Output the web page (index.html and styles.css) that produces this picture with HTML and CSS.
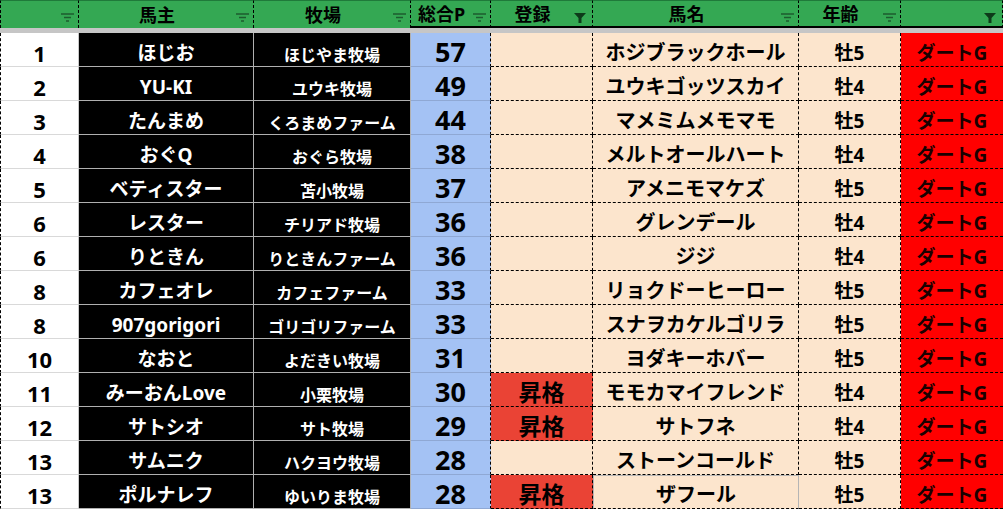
FILE: index.html
```html
<!DOCTYPE html>
<html lang="ja">
<head>
<meta charset="utf-8">
<link rel="stylesheet" href="styles.css">
</head>
<body>
<div class="sheet">
  <div class="hd c-a"><span></span><svg class="fi" viewBox="0 0 13 9"><path d="M0 1h13M3 4.5h7M5 8h3" /></svg></div>
  <div class="hd c-b">馬主<svg class="fi" viewBox="0 0 13 9"><path d="M0 1h13M3 4.5h7M5 8h3" /></svg></div>
  <div class="hd c-c">牧場<svg class="fi" viewBox="0 0 13 9"><path d="M0 1h13M3 4.5h7M5 8h3" /></svg></div>
  <div class="hd c-d hb">総合P<svg class="fi" viewBox="0 0 13 9"><path d="M0 1h13M3 4.5h7M5 8h3" /></svg></div>
  <div class="hd c-e hb">登録<svg class="ff" viewBox="0 0 12 10"><path d="M0 0H12L7.5 5V10H4.5V5Z" /></svg></div>
  <div class="hd c-f hb">馬名<svg class="fi" viewBox="0 0 13 9"><path d="M0 1h13M3 4.5h7M5 8h3" /></svg></div>
  <div class="hd c-g hb">年齢<svg class="fi" viewBox="0 0 13 9"><path d="M0 1h13M3 4.5h7M5 8h3" /></svg></div>
  <div class="hd c-h hb"><svg class="ff" viewBox="0 0 12 10"><path d="M0 0H12L7.5 5V10H4.5V5Z" /></svg></div>
  <div class="band"></div>

  <div class="rk">1</div><div class="ow">ほじお</div><div class="fm">ほじやま牧場</div><div class="pt">57</div><div class="rg"></div><div class="hn">ホジブラックホール</div><div class="ag">牡5</div><div class="cl">ダートG</div>
  <div class="rk">2</div><div class="ow">YU-KI</div><div class="fm">ユウキ牧場</div><div class="pt">49</div><div class="rg"></div><div class="hn">ユウキゴッツスカイ</div><div class="ag">牡4</div><div class="cl">ダートG</div>
  <div class="rk">3</div><div class="ow">たんまめ</div><div class="fm">くろまめファーム</div><div class="pt">44</div><div class="rg"></div><div class="hn">マメミムメモマモ</div><div class="ag">牡5</div><div class="cl">ダートG</div>
  <div class="rk">4</div><div class="ow">おぐQ</div><div class="fm">おぐら牧場</div><div class="pt">38</div><div class="rg"></div><div class="hn">メルトオールハート</div><div class="ag">牡4</div><div class="cl">ダートG</div>
  <div class="rk">5</div><div class="ow">ベティスター</div><div class="fm">苫小牧場</div><div class="pt">37</div><div class="rg"></div><div class="hn">アメニモマケズ</div><div class="ag">牡5</div><div class="cl">ダートG</div>
  <div class="rk">6</div><div class="ow">レスター</div><div class="fm">チリアド牧場</div><div class="pt">36</div><div class="rg"></div><div class="hn">グレンデール</div><div class="ag">牡4</div><div class="cl">ダートG</div>
  <div class="rk">6</div><div class="ow">りときん</div><div class="fm">りときんファーム</div><div class="pt">36</div><div class="rg"></div><div class="hn">ジジ</div><div class="ag">牡4</div><div class="cl">ダートG</div>
  <div class="rk">8</div><div class="ow">カフェオレ</div><div class="fm">カフェファーム</div><div class="pt">33</div><div class="rg"></div><div class="hn">リョクドーヒーロー</div><div class="ag">牡5</div><div class="cl">ダートG</div>
  <div class="rk">8</div><div class="ow">907gorigori</div><div class="fm">ゴリゴリファーム</div><div class="pt">33</div><div class="rg"></div><div class="hn">スナヲカケルゴリラ</div><div class="ag">牡5</div><div class="cl">ダートG</div>
  <div class="rk">10</div><div class="ow">なおと</div><div class="fm">よだきい牧場</div><div class="pt">31</div><div class="rg"></div><div class="hn">ヨダキーホバー</div><div class="ag">牡5</div><div class="cl">ダートG</div>
  <div class="rk">11</div><div class="ow">みーおんLove</div><div class="fm">小栗牧場</div><div class="pt">30</div><div class="rg up">昇格</div><div class="hn">モモカマイフレンド</div><div class="ag">牡4</div><div class="cl">ダートG</div>
  <div class="rk">12</div><div class="ow">サトシオ</div><div class="fm">サト牧場</div><div class="pt">29</div><div class="rg up">昇格</div><div class="hn">サトフネ</div><div class="ag">牡4</div><div class="cl">ダートG</div>
  <div class="rk">13</div><div class="ow">サムニク</div><div class="fm">ハクヨウ牧場</div><div class="pt">28</div><div class="rg"></div><div class="hn">ストーンコールド</div><div class="ag">牡5</div><div class="cl">ダートG</div>
  <div class="rk">13</div><div class="ow">ポルナレフ</div><div class="fm">ゆいりま牧場</div><div class="pt">28</div><div class="rg up">昇格</div><div class="hn sel">ザフール</div><div class="ag">牡5</div><div class="cl">ダートG</div>
</div>
</body>
</html>
```

FILE: styles.css
```css
html, body {
  margin: 0;
  padding: 0;
  background: #ffffff;
}

body {
  font-family: "Noto Sans", "Noto Sans CJK JP", sans-serif;
  font-weight: 700;
  color: #000;
}

.sheet {
  display: grid;
  grid-template-columns: 79px 175px 157px 80px 102px 206px 102px 102px;
  grid-template-rows: 28px 5px repeat(14, 34px);
  width: 1003px;
}

.sheet > div {
  box-sizing: border-box;
  display: flex;
  align-items: center;
  justify-content: center;
  white-space: nowrap;
  line-height: 1;
}

/* header */
.hd {
  position: relative;
  background: #34a853;
  border-top: 1px solid #1f7a3a;
  border-right: 1px dashed #000;
  font-size: 18px;
  padding-top: 1px;
  padding-right: 18px;
}
.hd.c-a {
  border-left: 1px dashed #000;
}
.hd.hb {
  border-bottom: 2px solid #000;
}
.fi {
  position: absolute;
  right: 4px;
  top: 12px;
  width: 13px;
  height: 9px;
}
.fi path {
  stroke: #1d5b2f;
  stroke-width: 1.6;
  fill: none;
}
.ff {
  position: absolute;
  right: 6px;
  top: 12px;
  width: 12px;
  height: 10px;
}
.ff path {
  fill: #0d3b1a;
}

.band {
  grid-column: 1 / -1;
  background: #c6c6c6;
}

/* rank */
.rk {
  background: #fff;
  border-left: 1px dashed #000;
  border-right: 1px solid #c8c8c8;
  border-bottom: 1px solid #d9d9d9;
  font-size: 22px;
  padding-top: 6px;
}

/* owner / farm */
.ow, .fm {
  background: #000;
  color: #fff;
  border-right: 1px solid #b0b0b0;
  border-bottom: 1px solid #b0b0b0;
}
.ow {
  font-size: 19px;
  padding-top: 8px;
}
.fm {
  font-size: 16px;
  padding-top: 10px;
}

/* points */
.pt {
  background: #a4c2f4;
  border-bottom: 1px solid #8fa8d4;
  border-right: 1px dashed #000;
  font-size: 27px;
  padding-top: 3px;
}

/* peach columns */
.rg, .hn, .ag {
  background: #fce5cd;
  border-right: 1px dashed #000;
  border-bottom: 1px dashed #000;
}
.rg {
  font-size: 23px;
  padding-top: 5px;
}
.rg.up {
  background: #ea4335;
}
.hn {
  font-size: 20px;
  padding-top: 6px;
}
.hn.sel {
  border-top: 1px solid #b5b5b5;
  border-left: 1px solid #b5b5b5;
  border-right: 1px solid #b5b5b5;
}
.ag {
  font-size: 19px;
  padding-top: 8px;
}

.cl {
  background: #ff0000;
  color: #1a0000;
  border-bottom: 1px dashed #000;
  font-size: 19px;
  padding-top: 8px;
}
```
